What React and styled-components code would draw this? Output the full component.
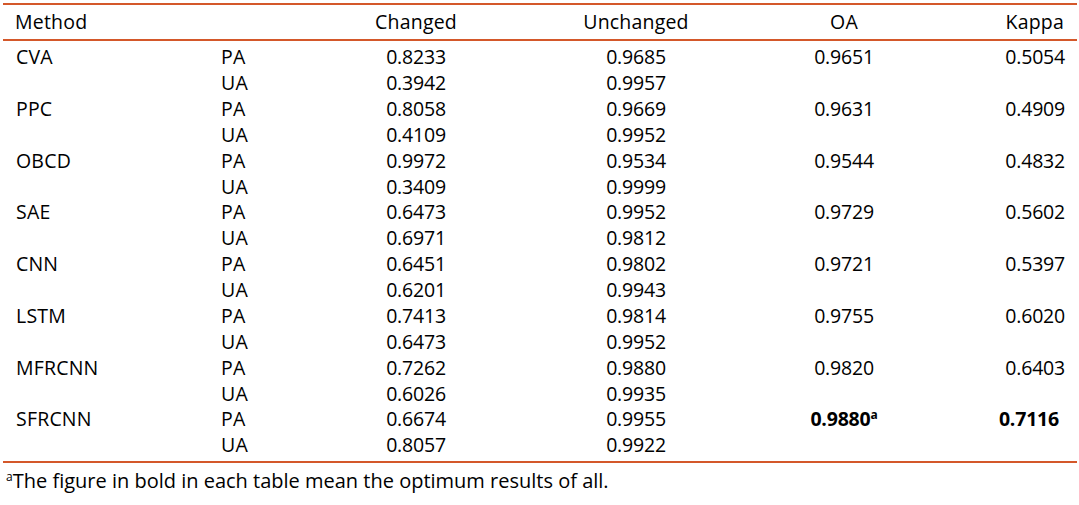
import React from "react";
import styled, { createGlobalStyle } from "styled-components";

const GlobalStyle = createGlobalStyle`
  html, body {
    margin: 0;
    padding: 0;
    background: #ffffff;
  }
  body {
    font-family: "Open Sans", "Noto Sans", sans-serif;
    color: #000000;
  }
`;

const Page = styled.div`
  width: 1079px;
  height: 505px;
  padding: 3px 2px 0 3px;
  box-sizing: border-box;
  overflow: hidden;
`;

const Table = styled.div`
  border-top: 2px solid #d4582a;
  border-bottom: 2px solid #d4582a;
`;

const Row = styled.div`
  display: grid;
  grid-template-columns: 218px 95px 200px 240px 176px 1fr;
  align-items: center;
  height: ${(p) => (p.$head ? "34px" : "25.875px")};
  font-size: 19.5px;
  letter-spacing: -0.2px;
`;

const Head = styled.div`
  border-bottom: 2px solid #d4582a;
`;

const Body = styled.div`
  padding: 3px 0;
`;

const Cell = styled.div`
  text-align: ${(p) => p.$align || "center"};
  padding-left: ${(p) => (p.$align === "left" ? p.$pad || "0px" : "0px")};
  padding-right: ${(p) => (p.$align === "right" ? p.$pad || "0px" : "0px")};
  font-weight: ${(p) => (p.$bold ? 700 : 500)};
  letter-spacing: ${(p) => (p.$word ? "0.2px" : "inherit")};
  white-space: nowrap;
  line-height: 1;
`;

const Sup = styled.sup`
  font-size: 12px;
  vertical-align: 7px;
  line-height: 0;
`;

const Note = styled.p`
  margin: 0;
  padding: 8px 0 0 3px;
  font-size: 20px;
  font-weight: 500;
  letter-spacing: 0;
  line-height: 20px;
`;

const data = [
  ["CVA", ["0.8233", "0.9685"], ["0.3942", "0.9957"], "0.9651", "0.5054"],
  ["PPC", ["0.8058", "0.9669"], ["0.4109", "0.9952"], "0.9631", "0.4909"],
  ["OBCD", ["0.9972", "0.9534"], ["0.3409", "0.9999"], "0.9544", "0.4832"],
  ["SAE", ["0.6473", "0.9952"], ["0.6971", "0.9812"], "0.9729", "0.5602"],
  ["CNN", ["0.6451", "0.9802"], ["0.6201", "0.9943"], "0.9721", "0.5397"],
  ["LSTM", ["0.7413", "0.9814"], ["0.6473", "0.9952"], "0.9755", "0.6020"],
  ["MFRCNN", ["0.7262", "0.9880"], ["0.6026", "0.9935"], "0.9820", "0.6403"],
  ["SFRCNN", ["0.6674", "0.9955"], ["0.8057", "0.9922"], "0.9880", "0.7116", true],
];

export default function App() {
  return (
    <Page>
      <GlobalStyle />
      <Table>
        <Head>
          <Row $head>
            <Cell $align="left" $pad="12px" $word>Method</Cell>
            <Cell />
            <Cell $word>Changed</Cell>
            <Cell $word>Unchanged</Cell>
            <Cell $word>OA</Cell>
            <Cell $align="right" $pad="13px" $word>Kappa</Cell>
          </Row>
        </Head>
        <Body>
          {data.map(([name, pa, ua, oa, kappa, best]) => (
            <React.Fragment key={name}>
              <Row>
                <Cell $align="left" $pad="13px" $word>{name}</Cell>
                <Cell $align="left" $word>PA</Cell>
                <Cell>{pa[0]}</Cell>
                <Cell>{pa[1]}</Cell>
                <Cell $bold={best}>
                  {oa}
                  {best && <Sup>a</Sup>}
                </Cell>
                <Cell $align="right" $pad={best ? "18px" : "12px"} $bold={best}>
                  {kappa}
                </Cell>
              </Row>
              <Row>
                <Cell />
                <Cell $align="left" $word>UA</Cell>
                <Cell>{ua[0]}</Cell>
                <Cell>{ua[1]}</Cell>
                <Cell />
                <Cell />
              </Row>
            </React.Fragment>
          ))}
        </Body>
      </Table>
      <Note>
        <Sup>a</Sup>The figure in bold in each table mean the optimum results of all.
      </Note>
    </Page>
  );
}
